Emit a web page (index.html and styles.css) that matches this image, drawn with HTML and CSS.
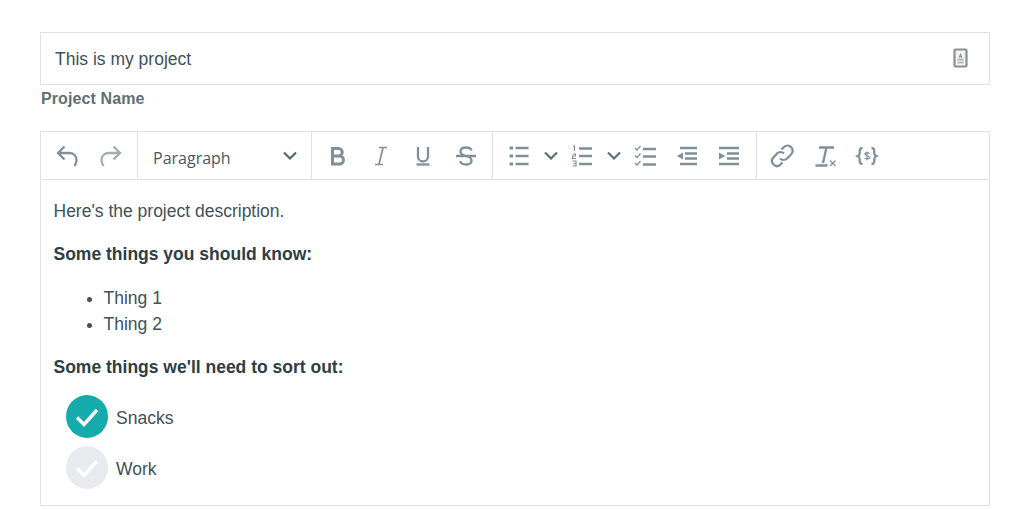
FILE: index.html
```html
<!DOCTYPE html>
<html lang="en">

<head>
  <meta charset="UTF-8">
  <title>Project</title>
  <link rel="stylesheet" href="styles.css">
</head>

<body>
  <div class="name-field">
    <span>This is my project</span>
    <svg class="contact-icon" width="15" height="20" viewBox="0 0 15 20">
      <rect x="1.500" y="1.500" width="12" height="17" rx="1" fill="#f4f4f4" stroke="#8c8f90" stroke-width="2.200" />
      <path d="M7.500 5l2 4.500h-4z" fill="#8f9395" />
      <path d="M4.500 11.500h6M4.500 14.500h6" stroke="#b4b7b8" stroke-width="2" />
    </svg>
  </div>
  <label class="name-label">Project Name</label>

  <div class="editor">
    <div class="toolbar">
      <div class="tool-group group-history">
        <button class="tool"><svg class="icon" viewBox="0 0 24 24"><path d="M9.500 2.500 3 9l6.500 6.500M3 9h11c4.500 0 7.500 3 7.500 7 0 2.500-1 4.500-2 6" /></svg></button>
        <button class="tool light"><svg class="icon" viewBox="0 0 24 24"><path d="M14.500 2.500 21 9l-6.500 6.500M21 9H10c-4.500 0-7.500 3-7.500 7 0 2.500 1 4.500 2 6" /></svg></button>
      </div>
      <div class="tool-group group-format">
        <span class="format-name">Paragraph</span>
        <svg class="chevron dark" viewBox="0 0 14 9"><path d="M1 1.500l6 6 6-6" /></svg>
      </div>
      <div class="tool-group group-marks">
        <button class="tool"><svg class="icon thick" viewBox="0 0 24 24"><path d="M6.500 4.500h6a3.700 3.700 0 0 1 0 7.500h-6zM6.500 12h7a4 4 0 0 1 0 8h-7zM6.500 3v18.500" /></svg></button>
        <button class="tool"><svg class="icon thin" viewBox="0 0 24 24"><path d="M10 3.500h8M6 20.500h8M14 3.500l-4 17" /></svg></button>
        <button class="tool"><svg class="icon" viewBox="0 0 24 24"><path d="M7 3v9.500a5 5 0 0 0 10 0V3" /><path d="M5.500 20.500h13" /></svg></button>
        <button class="tool"><svg class="icon" viewBox="0 0 24 24"><path d="M2 12h20M17.500 6.500C17 4.500 15 3.500 12 3.500c-3.500 0-5.500 1.700-5.500 4 0 2.500 2 3.700 5.500 4.500 3.500.8 5.500 2 5.500 4.500 0 2.300-2 4-5.500 4-3 0-5.200-1.200-5.800-3.500" /></svg></button>
      </div>
      <div class="tool-group group-lists">
        <button class="tool"><svg class="icon" viewBox="0 0 24 24"><path d="M8.500 4h13M8.500 12h13M8.500 20h13" /><path class="dots" d="M2.500 4h3.500M2.500 12h3.500M2.500 20h3.500" /></svg></button>
        <button class="tool-arrow"><svg class="chevron" viewBox="0 0 14 9"><path d="M1 1.500l6 6 6-6" /></svg></button>
        <button class="tool"><svg class="icon" viewBox="0 0 24 24"><path d="M9 4.500h13M9 12h13M9 20h13" /><path class="fine" d="M3 2.500 4.500 2v5M2.500 10h3v2h-3v2.500h3.500M2.500 17h3.500v5h-3.500M3.500 19.500h2.500" /></svg></button>
        <button class="tool-arrow"><svg class="chevron" viewBox="0 0 14 9"><path d="M1 1.500l6 6 6-6" /></svg></button>
        <button class="tool"><svg class="icon" viewBox="0 0 24 24"><path d="M10 5h13M10 12.500h13M10 20.500h13" /><path class="fine" d="M2 4l2 2 3.500-4M2 11.500l2 2 3.500-4M2 19l2 2 3.500-4" /></svg></button>
        <button class="tool"><svg class="icon" viewBox="0 0 24 24"><path d="M5 4h17M10 9.500h12M10 14.500h12M5 20h17" /><path class="solid" d="M8 8.500v7l-6-3.500z" /></svg></button>
        <button class="tool"><svg class="icon" viewBox="0 0 24 24"><path d="M2 4h20M10 9.500h12M10 14.500h12M2 20h20" /><path class="solid" d="M2 8.500v7l6-3.500z" /></svg></button>
      </div>
      <div class="tool-group group-misc">
        <button class="tool"><svg class="icon" viewBox="0 0 24 24"><path d="M10 14.500a5 5 0 0 0 7 0l4-4a5 5 0 0 0-7-7.500l-2.500 2.500M14 9.500a5 5 0 0 0-7 0l-4 4.500a5 5 0 0 0 7 7l2.500-2.500" /></svg></button>
        <button class="tool"><svg class="icon" viewBox="0 0 24 24"><path d="M6 3.500h15M13.500 3.500 10 19M2.500 21.500h12" /><path class="fine" d="M17 16.500l5.500 5.500M22.500 16.500 17 22" /></svg></button>
        <button class="tool"><svg class="icon" viewBox="0 0 24 24"><path d="M7.500 4c-3 0-2.800 2-2.800 4.500S4.500 11 2.500 12c2 1 2.200 1.200 2.200 3.500S4.500 20 7.500 20M16.500 4c3 0 2.800 2 2.800 4.500s.2 2.500 2.200 3.500c-2 1-2.200 1.200-2.200 3.500s.2 4.500-2.800 4.500" /><path class="fine" d="M14.500 9.500c-.5-1-4.500-1.500-4.800.3-.2 1.900 4.800 1.300 4.800 3.700 0 1.800-4.300 1.500-5 .5M12 7.500v9" /></svg></button>
      </div>
    </div>

    <div class="content">
      <p>Here's the project description.</p>
      <p class="gap-more"><strong>Some things you should know:</strong></p>
      <ul>
        <li>Thing 1</li>
        <li>Thing 2</li>
      </ul>
      <p class="gap-less"><strong>Some things we'll need to sort out:</strong></p>
      <div class="todo">
        <div class="todo-item">
          <span class="todo-check done"><svg viewBox="0 0 24 24"><path d="M2 12.500l7 7L22 5" /></svg></span>
          <span class="todo-text">Snacks</span>
        </div>
        <div class="todo-item">
          <span class="todo-check"><svg viewBox="0 0 24 24"><path d="M2 12.500l7 7L22 5" /></svg></span>
          <span class="todo-text">Work</span>
        </div>
      </div>
    </div>
  </div>
</body>

</html>
```

FILE: styles.css
```css
body {
  font-family: "Liberation Sans", Arial, sans-serif;
  font-size: 17.5px;
  color: #40525b;
  background-color: #fff;
  margin: 0;
  padding: 32px 39px 0 40px;
}

button {
  border: 0;
  padding: 0;
  background: none;
  display: flex;
  align-items: center;
  justify-content: center;
}

.name-field {
  display: flex;
  align-items: center;
  justify-content: space-between;
  height: 50px;
  padding: 1px 21px 0 14px;
  border: 1px solid #e0e0e0;
}

.contact-icon {
  display: block;
  position: relative;
  top: -1px;
}

.name-label {
  display: block;
  margin-top: 4px;
  margin-left: 1px;
  height: 19px;
  line-height: 19px;
  font-size: 16px;
  font-weight: bold;
  letter-spacing: .1px;
  color: #5f6f76;
}

.editor {
  margin-top: 23px;
  border: 1px solid #e0e0e0;
  height: 373px;
  overflow: hidden;
}

.toolbar {
  display: flex;
  height: 47px;
  margin-left: 1px;
  border-bottom: 1px solid #e0e0e0;
}

.tool-group {
  display: flex;
  align-items: center;
  border-right: 1px solid #e0e0e0;
  box-sizing: border-box;
}

.group-history {
  width: 96px;
  padding-left: 3px;
}

.group-format {
  width: 174px;
  padding: 0 14px 0 15px;
  justify-content: space-between;
}

.format-name {
  font-family: "Open Sans", sans-serif;
  font-size: 16px;
  color: #455a64;
  position: relative;
  top: 2px;
}

.group-marks {
  width: 181px;
  padding-left: 5px;
}

.group-marks .tool {
  width: 42.5px;
}

.group-lists {
  width: 264px;
  padding-left: 5px;
}

.group-misc {
  border-right: 0;
  padding-left: 4px;
}

.group-misc .tool {
  width: 42.5px;
}

.tool {
  width: 44px;
  height: 46px;
}

.group-lists .tool {
  width: 42px;
}

.tool-arrow {
  width: 21px;
  height: 46px;
}

.icon {
  display: block;
  width: 24px;
  height: 24px;
  fill: none;
  stroke: #7f9099;
  stroke-width: 2.300;
}

.icon.thick {
  stroke-width: 3;
}

.icon.thin {
  stroke-width: 1.700;
}

.light .icon {
  stroke: #9fadb4;
}

.icon .dots {
  stroke-width: 3;
}

.icon .fine {
  stroke-width: 1.200;
}

.icon .solid {
  fill: #7f9099;
  stroke: none;
}

.chevron {
  display: block;
  width: 14px;
  height: 9px;
  fill: none;
  stroke: #5c707b;
  stroke-width: 2.200;
}

.chevron.dark {
  stroke: #546872;
}

.content {
  padding: 0 12.5px;
}

.content p {
  margin: 21px 0 0;
  line-height: 21px;
}

.content .gap-more {
  margin-top: 22px;
}

.content .gap-less {
  margin-top: 20px;
}

.content strong {
  color: #2d3e46;
}

.content ul {
  margin: 20px 0 0;
  padding-left: 50px;
}

.content li {
  line-height: 26px;
}

.todo {
  margin-top: 17px;
  padding-left: 12.5px;
}

.todo-item {
  display: flex;
  align-items: center;
  gap: 8px;
  margin-bottom: 8px;
}

.todo-text {
  padding-top: 4px;
}

.todo-check {
  width: 42px;
  height: 43px;
  border-radius: 50%;
  background-color: #e8eaed;
  display: flex;
  align-items: center;
  justify-content: center;
}

.todo-check svg {
  display: block;
  width: 24px;
  height: 24px;
  fill: none;
  stroke: #fff;
  stroke-width: 3.400;
}

.todo-check.done {
  background-color: #15abab;
}
```
